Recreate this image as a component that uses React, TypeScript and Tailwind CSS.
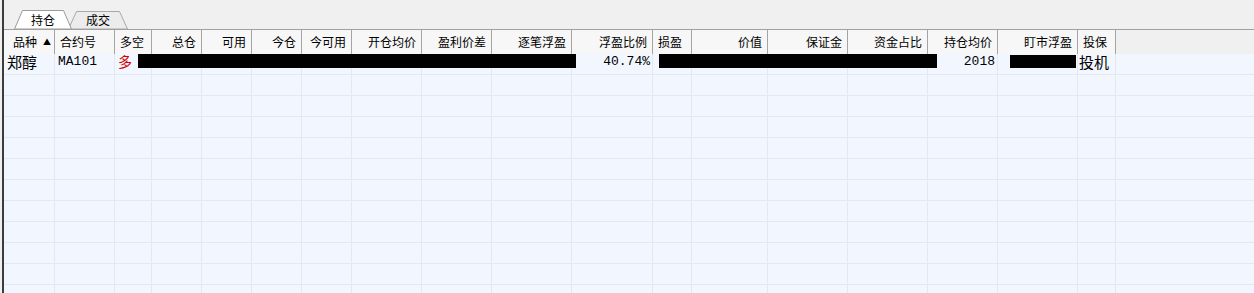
const cjk = "font-['Noto_Sans_CJK_SC','Noto_Sans',sans-serif]";
const mono = "font-['Liberation_Mono','DejaVu_Sans_Mono',monospace]";

type Col = { label: string; w: string; left?: boolean };

const columns: Col[] = [
  { label: "品种", w: "w-[51px]", left: true },
  { label: "合约号", w: "w-[60px]", left: true },
  { label: "多空", w: "w-[37px]", left: true },
  { label: "总仓", w: "w-[50px]" },
  { label: "可用", w: "w-[50px]" },
  { label: "今仓", w: "w-[50px]" },
  { label: "今可用", w: "w-[50px]" },
  { label: "开仓均价", w: "w-[70px]" },
  { label: "盈利价差", w: "w-[70px]" },
  { label: "逐笔浮盈", w: "w-[80px]" },
  { label: "浮盈比例", w: "w-[81px]" },
  { label: "损盈", w: "w-[39px]", left: true },
  { label: "价值", w: "w-[76px]" },
  { label: "保证金", w: "w-[80px]" },
  { label: "资金占比", w: "w-[80px]" },
  { label: "持仓均价", w: "w-[70px]" },
  { label: "盯市浮盈", w: "w-[80px]" },
  { label: "投保", w: "w-[38px]", left: true },
];

function Tab({ label, active }: { label: string; active?: boolean }) {
  return (
    <div
      className={
        active
          ? "relative z-10 flex h-[19px] w-[58px] items-center justify-center"
          : "relative -ml-[4px] mt-[1px] flex h-[18px] w-[60px] items-center justify-center"
      }
    >
      <svg className="absolute inset-0 h-full w-full" viewBox={active ? "0 0 58 19" : "0 0 60 18"}>
        {active ? (
          <polygon points="0.5,19 8.5,0.5 49.5,0.5 57.5,19" fill="#ffffff" stroke="#9c9c9c" />
        ) : (
          <polygon points="0.5,18 8.5,0.5 51.5,0.5 59.5,18" fill="#ececec" stroke="#a8a8a8" />
        )}
      </svg>
      <span className="relative text-[12px] leading-none text-black">{label}</span>
    </div>
  );
}

function HeaderRow() {
  return (
    <div className="flex h-[24px] shrink-0 bg-[#f0f0f0]">
      {columns.map((c, i) => (
        <div
          key={c.label}
          className={`${c.w} flex h-full shrink-0 items-center border-r border-[#a4a4a4] bg-[#f7f7f7] text-[12px] leading-none text-black ${
            c.left ? "justify-start pl-[5px]" : "justify-end pr-[5px]"
          } ${i === 0 ? "pl-[9px]" : ""}`}
        >
          {c.label}
          {i === 0 && <span className="ml-[6px] text-[8px]">▲</span>}
        </div>
      ))}
      <div className="flex-1" />
    </div>
  );
}

function GridRow({ children }: { children?: React.ReactNode }) {
  return (
    <div className="relative flex h-[21px] shrink-0 border-b border-[#e3e8f1]">
      {columns.map((c) => (
        <div key={c.label} className={`${c.w} h-full shrink-0 border-r border-[#e3e8f1]`} />
      ))}
      <div className="flex-1" />
      {children}
    </div>
  );
}

export default function App() {
  return (
    <div className={`flex h-[293px] w-[1254px] overflow-hidden bg-[#f0f0f0] ${cjk}`}>
      <div className="w-[2px] shrink-0" />
      <div className="w-[2px] shrink-0 bg-[#3c3c3c]" />
      <div className="flex min-w-0 flex-1 flex-col">
        <div className="flex h-[29px] shrink-0 items-start pl-[10px] pt-[10px]">
          <Tab label="持仓" active />
          <Tab label="成交" />
        </div>
        <div className="h-px shrink-0 bg-[#a0a0a0]" />
        <HeaderRow />
        <div className="flex min-h-0 flex-1 flex-col bg-[#f2f7ff]">
          <GridRow>
            <div className="absolute inset-0 flex items-start">
              <div className="-mt-[3px] w-[51px] shrink-0 pl-[3px] text-[15px] leading-[21px] text-black">郑醇</div>
              <div className={`w-[60px] shrink-0 pl-[3px] text-[13px] leading-[16px] text-black ${mono}`}>
                MA101
              </div>
              <div className="-mt-[3px] w-[37px] shrink-0 pl-[3px] text-[14px] leading-[21px] text-[#d20000]">多</div>
              <div className="w-[420px] shrink-0" />
              <div className={`w-[81px] shrink-0 pr-[3px] text-right text-[13px] leading-[16px] text-black ${mono}`}>
                40.74%
              </div>
              <div className="w-[39px] shrink-0" />
              <div className="w-[236px] shrink-0" />
              <div className={`w-[70px] shrink-0 pr-[3px] text-right text-[13px] leading-[16px] text-black ${mono}`}>
                2018
              </div>
              <div className="w-[80px] shrink-0" />
              <div className="-mt-[3px] w-[38px] shrink-0 pl-[1px] text-[15px] leading-[21px] text-black">投机</div>
            </div>
            <div className="absolute left-[134px] top-0 h-[14px] w-[438px] bg-black" />
            <div className="absolute left-[655px] top-0 h-[14px] w-[278px] bg-black" />
            <div className="absolute left-[1006px] top-px h-[13px] w-[66px] bg-black" />
          </GridRow>
          {Array.from({ length: 11 }).map((_, i) => (
            <GridRow key={i} />
          ))}
        </div>
      </div>
    </div>
  );
}
